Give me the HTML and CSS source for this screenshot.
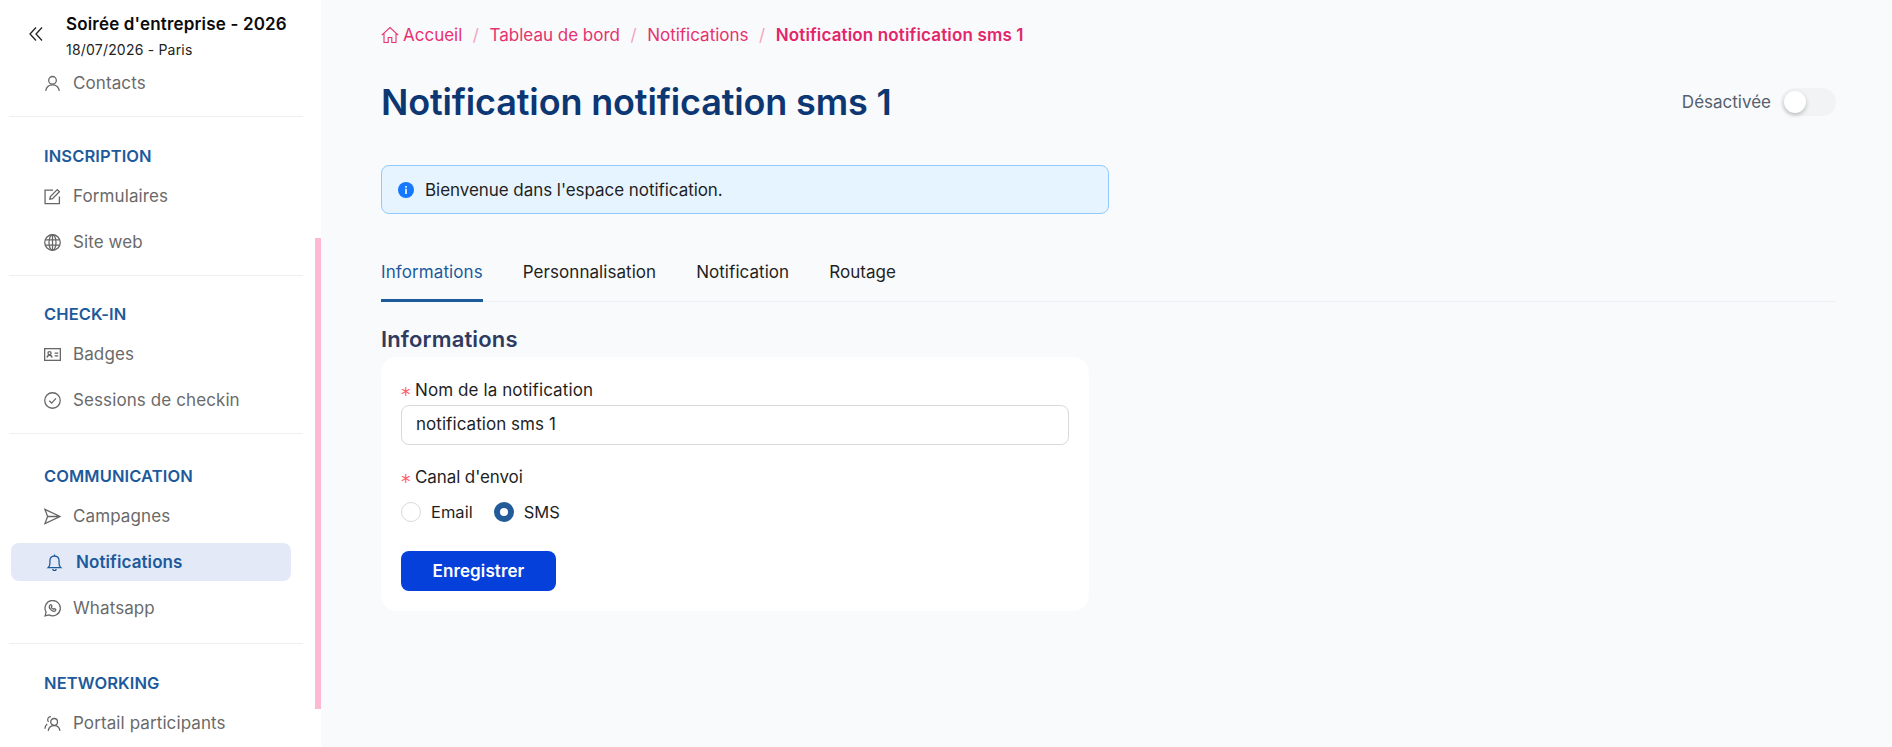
FILE: index.html
```html
<!DOCTYPE html>
<html lang="fr">
<head>
<meta charset="utf-8">
<title>Notification notification sms 1</title>
<link rel="stylesheet" href="styles.css">
</head>
<body>
<div class="app">
  <aside class="sidebar">
    <header class="side-head">
      <button class="collapse" aria-label="Réduire">
        <svg viewBox="0 0 16 16" width="16" height="16" fill="none" stroke="#222" stroke-width="1.3"><path d="M8 1.500 2 8l6 6.500M14 1.500 8 8l6 6.500"/></svg>
      </button>
      <div>
        <div class="event-title">Soirée d'entreprise - 2026</div>
        <div class="event-sub">18/07/2026 - Paris</div>
      </div>
    </header>
    <nav class="nav">
      <section class="sec sec-0">
        <a class="item"><svg class="ico" viewBox="0 0 16 16"><circle cx="8" cy="5" r="3.6"/><path d="M1.6 15c.5-3.600 3-5.800 6.400-5.800s5.900 2.200 6.400 5.800"/></svg>Contacts</a>
      </section>
      <section class="sec sec-1">
        <h3 class="sec-title">INSCRIPTION</h3>
        <a class="item"><svg class="ico" viewBox="0 0 16 16"><path d="M14.500 8v6.800H1V2h7.500"/><path d="M5.500 10.500 6 8l6.500-6.500 2 2L8 10z"/></svg>Formulaires</a>
        <a class="item"><svg class="ico" viewBox="0 0 16 16"><circle cx="8" cy="8" r="7.300"/><ellipse cx="8" cy="8" rx="3.300" ry="7.300"/><path d="M1 5.500h14M1 10.500h14M8 .7v14.600"/></svg>Site web</a>
      </section>
      <section class="sec sec-2">
        <h3 class="sec-title">CHECK-IN</h3>
        <a class="item"><svg class="ico" viewBox="0 0 16 16"><rect x=".6" y="2.500" width="14.800" height="11"/><circle cx="5.200" cy="6.700" r="1.500"/><path d="M2.800 11c.2-1.500 1.200-2.300 2.400-2.300s2.200.8 2.400 2.300M10 6.800h3.400M10 9.300h3.400"/></svg>Badges</a>
        <a class="item"><svg class="ico" viewBox="0 0 16 16"><circle cx="8" cy="8" r="7.300"/><path d="m5 8.300 2.200 2.200L11.300 6"/></svg>Sessions de checkin</a>
      </section>
      <section class="sec sec-3">
        <h3 class="sec-title">COMMUNICATION</h3>
        <a class="item"><svg class="ico" viewBox="0 0 16 16"><path d="M.9 1.300 15 8 .9 14.700 3.400 8zM3.400 8H15"/></svg>Campagnes</a>
        <a class="item active"><svg class="ico" viewBox="0 0 16 16"><path d="M2 12.800h12c-1-.9-1.700-1.700-1.700-3.800V6.300C12.300 3.700 10.500 2 8 2S3.700 3.700 3.700 6.300V9c0 2.100-.7 2.900-1.700 3.800z"/><path d="M8 .5V2M6.500 14.200a1.500 1.500 0 0 0 3 0"/></svg>Notifications</a>
        <a class="item"><svg class="ico" viewBox="0 0 16 16"><path d="M1 15l1-3.600A7.200 7.200 0 1 1 4.700 14z"/><path d="M5.600 4.800c-1 1-.6 2.800.8 4.300 1.500 1.500 3.200 2 4.300 1 .5-.5.500-1 .2-1.300l-1.200-.7-.8.600c-.8-.2-1.800-1.200-2-2l.6-.8-.7-1.200c-.3-.3-.7-.3-1.200.1z"/></svg>Whatsapp</a>
      </section>
      <section class="sec sec-4">
        <h3 class="sec-title">NETWORKING</h3>
        <a class="item"><svg class="ico" viewBox="0 0 16 16"><circle cx="9.500" cy="6.500" r="3.200"/><path d="M4 15c.3-3 2.500-5 5.500-5s5.200 2 5.500 5M6.500 1.500A3 3 0 0 0 3.500 4.500c0 .8.300 1.500.8 2M3 8.500C1.800 9.500 1 11 .9 13"/></svg>Portail participants</a>
      </section>
    </nav>
    <div class="thumb"></div>
  </aside>

  <main class="main">
    <ol class="crumbs">
      <li class="crumb"><svg class="home" viewBox="0 0 18 18" width="18" height="18" fill="none" stroke="#e6326e" stroke-width="1.100"><path d="M.8 9.200 9 1.500l8.200 7.700M3 7.500v9h4.200v-5h3.600v5H15v-9"/></svg>Accueil</li>
      <li class="sep">/</li>
      <li class="crumb">Tableau de bord</li>
      <li class="sep">/</li>
      <li class="crumb">Notifications</li>
      <li class="sep">/</li>
      <li class="crumb current">Notification notification sms 1</li>
    </ol>

    <div class="title-row">
      <h1>Notification notification sms 1</h1>
      <div class="status">
        <span>Désactivée</span>
        <span class="switch"><span class="knob"></span></span>
      </div>
    </div>

    <div class="alert">
      <svg viewBox="0 0 16 16" width="16" height="16"><circle cx="8" cy="8" r="8" fill="#1677ff"/><rect x="7.200" y="6.800" width="1.600" height="5.200" fill="#fff"/><rect x="7.200" y="4" width="1.600" height="1.700" fill="#fff"/></svg>
      <span>Bienvenue dans l'espace notification.</span>
    </div>

    <div class="tabs">
      <span class="tab selected">Informations</span>
      <span class="tab">Personnalisation</span>
      <span class="tab">Notification</span>
      <span class="tab">Routage</span>
    </div>

    <h2>Informations</h2>
    <form class="card">
      <label class="label"><span class="req">*</span>Nom de la notification</label>
      <input class="input" type="text" value="notification sms 1">
      <div class="label label-2"><span class="req">*</span>Canal d'envoi</div>
      <div class="radios">
        <span class="radio"></span><span class="radio-text">Email</span>
        <span class="radio on"></span><span class="radio-text">SMS</span>
      </div>
      <button class="save" type="button">Enregistrer</button>
    </form>
  </main>
</div>
</body>
</html>
```
FILE: styles.css
```css
* { box-sizing: border-box; }
html, body { margin: 0; height: 100%; }
body {
  font-family: Inter, "Noto Sans", "Liberation Sans", sans-serif;
  font-size: 17px;
  letter-spacing: .1px;
  line-height: 24px;
  color: #1f1f1f;
  background: #f9fafc;
  overflow: hidden;
}
.app { display: flex; height: 747px; }

/* Sidebar */
.sidebar {
  position: relative;
  flex: 0 0 321px;
  height: 747px;
  overflow: hidden;
  background: #fff;
}
.side-head {
  display: flex;
  height: 64px;
  padding-left: 28px;
  padding-top: 12px;
}
.collapse {
  width: 38px;
  height: 24px;
  margin-top: 11px;
  padding: 0;
  border: 0;
  background: none;
  text-align: left;
}
.event-title { font-size: 17px; font-weight: 600; line-height: 24px; color: #0b0b0b; letter-spacing: .17px; }
.event-sub { font-size: 14px; line-height: 20px; margin-top: 4px; color: #222; letter-spacing: .2px; }
.nav { width: 294px; margin-left: 9px; }
.sec { padding-bottom: 14px; border-bottom: 1px solid #eeeff2; }
.sec-1 { padding-top: 27px; }
.sec-2 { padding-top: 26px; }
.sec-3 { padding-top: 30px; padding-bottom: 16px; }
.sec-4 { padding-top: 27px; border-bottom: 0; }
.sec-title {
  margin: 0 0 9px 35px;
  font-size: 16.500px;
  line-height: 24px;
  font-weight: 600;
  letter-spacing: .1px;
  color: #1d5a9c;
}
.item {
  display: flex;
  align-items: center;
  gap: 12px;
  height: 38px;
  width: 280px;
  margin: 0 0 8px 2px;
  padding-left: 33px;
  border-radius: 8px;
  color: #6a6a6a;
  font-size: 17px;
}
.sec > .item:last-child { margin-bottom: 0; }
.ico {
  flex: 0 0 17px;
  width: 17px;
  height: 17px;
  fill: none;
  stroke: #666;
  stroke-width: 1.200;
}
.item.active {
  background: #e3e9f7;
  color: #1d5a9c;
  font-weight: 600;
  padding-left: 35px;
  gap: 13px;
}
.item.active .ico { stroke: #1d5a9c; }
.thumb {
  position: absolute;
  right: 0;
  top: 238px;
  width: 6px;
  height: 471px;
  background: #fdb9d3;
}

/* Main */
.main { flex: 1; min-width: 0; padding: 23px 56px 0 60px; }
.crumbs {
  display: flex;
  align-items: center;
  list-style: none;
  margin: 0;
  padding: 0;
  height: 24px;
  gap: 10.500px;
  color: #e6326e;
  letter-spacing: 0;
}
.crumb { display: flex; align-items: center; gap: 4px; }
.current { font-weight: 600; color: #e2266a; letter-spacing: .15px; }
.sep { color: #f3a3bd; }
.title-row {
  display: flex;
  align-items: center;
  justify-content: space-between;
  margin-top: 33px;
  height: 44px;
}
h1 {
  margin: 0;
  font-size: 36px;
  line-height: 44px;
  font-weight: 600;
  letter-spacing: -.15px;
  color: #0c3773;
}
.status { display: flex; align-items: center; gap: 10px; color: #555f6d; letter-spacing: 0; }
.switch {
  display: block;
  width: 55px;
  height: 28px;
  padding: 3px;
  border-radius: 14px;
  background: #f2f3f5;
}
.knob {
  display: block;
  width: 22px;
  height: 22px;
  border-radius: 50%;
  background: #fff;
  box-shadow: 0 2px 4px rgba(0, 35, 11, .25);
}
.alert {
  display: flex;
  align-items: center;
  gap: 11px;
  width: 728px;
  height: 49px;
  margin-top: 41px;
  padding-left: 16px;
  background: #e6f4ff;
  border: 1px solid #91caff;
  border-radius: 8px;
  letter-spacing: -.05px;
}
.tabs {
  display: flex;
  gap: 40px;
  height: 88px;
  padding-top: 46px;
  border-bottom: 1px solid #eef0f3;
  letter-spacing: .05px;
}
.tab { height: 42px; padding-bottom: 15px; }
.selected { color: #1d5a9c; border-bottom: 3px solid #1d5a9c; letter-spacing: .1px; }
h2 {
  margin: 22px 0 3px;
  font-size: 22px;
  line-height: 30px;
  font-weight: 600;
  letter-spacing: .15px;
  color: #2e3a5f;
}
.card {
  width: 708px;
  height: 254px;
  padding: 21px 20px 20px;
  border-radius: 16px;
  background: #fff;
}
.label { display: flex; height: 24px; color: #1f1f1f; }
.label-2 { margin-top: 20px; letter-spacing: -.1px; }
.req { width: 14px; color: #ff5a5f; font-family: "DejaVu Sans", sans-serif; font-size: 19px; line-height: 32px; }
.input {
  display: block;
  width: 100%;
  height: 40px;
  margin-top: 3px;
  padding: 0 14px 2px;
  font: inherit;
  letter-spacing: .05px;
  color: #1f1f1f;
  border: 1px solid #d9d9d9;
  border-radius: 8px;
  background: #fff;
}
.radios { display: flex; align-items: center; height: 24px; margin-top: 11px; font-size: 16.500px; }
.radio {
  width: 20px;
  height: 20px;
  border-radius: 50%;
  border: 1px solid #d9d9d9;
  background: #fff;
}
.radio.on { border: 6.500px solid #235b98; }
.radio-text { margin-left: 10px; margin-right: 21px; letter-spacing: 0; }
.save {
  display: block;
  width: 155px;
  height: 40px;
  margin-top: 27px;
  padding: 0;
  border: 0;
  border-radius: 8px;
  background: #0540db;
  color: #fff;
  font: inherit;
  font-weight: 600;
  letter-spacing: .1px;
}
```
